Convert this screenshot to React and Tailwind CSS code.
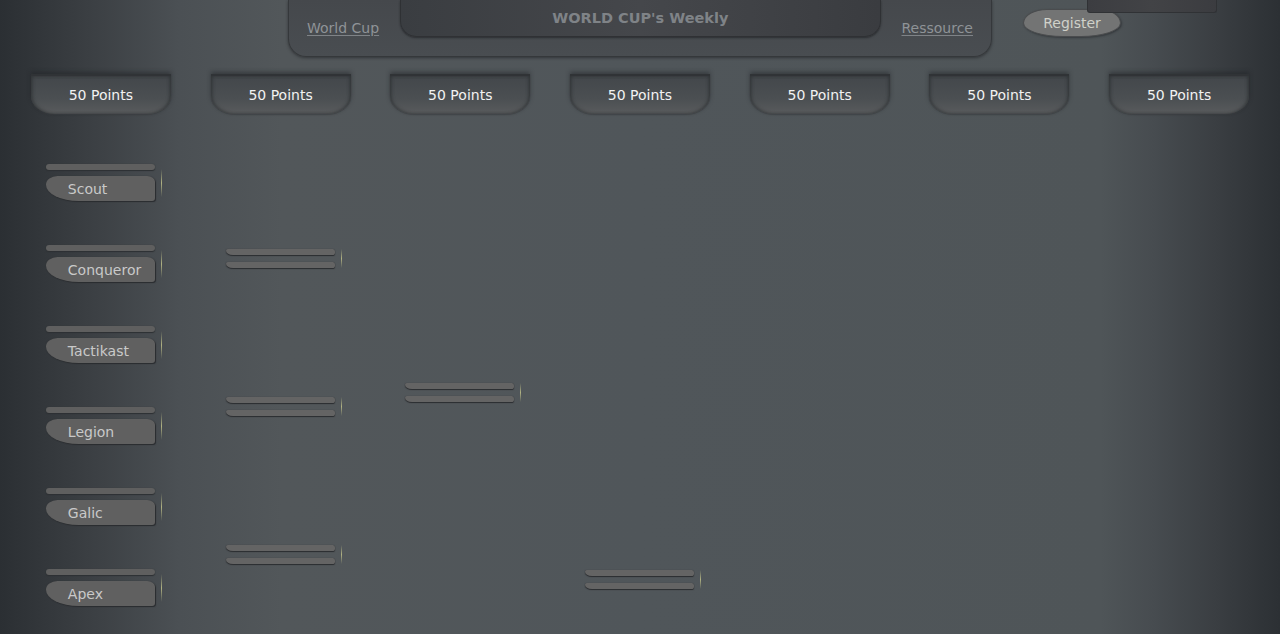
import React from "react";

const teams = ["Scout", "Conqueror", "Tactikast", "Legion", "Galic", "Apex"];

// rounds after the first one: padding from the tab row and gap between matches
const rounds = [
  { pad: "pt-[135px] gap-[129px]", count: 3 },
  { pad: "pt-[269px] gap-[129px]", count: 1 },
  { pad: "pt-[456px] gap-[129px]", count: 1 },
  { pad: "pt-[135px]", count: 0 },
  { pad: "pt-[135px]", count: 0 },
  { pad: "pt-[135px]", count: 0 },
];

const Accent = ({ tall }) => (
  <div
    className={`ml-[6px] w-px shrink-0 bg-[linear-gradient(to_bottom,rgba(170,172,120,0),#b0b283_50%,rgba(170,172,120,0))] ${
      tall ? "h-[28px]" : "h-[19px]"
    }`}
  />
);

const Bar = () => (
  <div className="h-[6px] w-[109px] bg-[#646464] rounded-[2px_3px_3px_8px/2px_3px_3px_5px] shadow-[0_1px_1px_#2b2d30,0_0_1px_#34373a]" />
);

const TeamSlot = ({ name }) => (
  <div className="flex items-center">
    <div className="flex flex-col gap-[6px] w-[109px]">
      <div className="h-[6px] w-[109px] bg-[#5f5f5f] rounded-[3px] shadow-[0_1px_1px_#2d3033,0_0_1px_#33363a]" />
      <div className="h-[25px] w-[109px] bg-[#606060] pl-[22px] pt-[1px] flex items-center text-[14px] text-[#c9c9c9] rounded-[12px_8px_3px_34px/9px_6px_3px_17px] shadow-[1px_1px_1px_#2a2c2f,0_0_1px_#303336]">
        {name}
      </div>
    </div>
    <Accent tall />
  </div>
);

const Match = () => (
  <div className="flex items-center">
    <div className="flex flex-col gap-[7px] w-[109px]">
      <Bar />
      <Bar />
    </div>
    <Accent />
  </div>
);

export default function App() {
  return (
    <div className="relative min-h-[634px] w-full overflow-hidden font-['DejaVu_Sans','Liberation_Sans',sans-serif] bg-[linear-gradient(to_right,#2b2f33_0%,#3b3f43_7%,#4b5054_14%,#52575a_22%,#50565a_50%,#4f5558_86%,#474c50_90%,#3a3e42_95%,#2c3034_100%)]">
      {/* top bar */}
      <div className="flex h-[57px]">
        <div className="w-[288px] shrink-0" />
        <header className="w-[704px] h-[57px] shrink-0 flex justify-between px-[18px] bg-[linear-gradient(to_bottom,#45484c,#494d51)] border-x border-b border-[#35383b] rounded-b-[18px] shadow-[0_1px_3px_rgba(30,32,35,0.6)]">
          <a href="#" className="mt-[18px] h-[20px] leading-[20px] text-[14px] text-[#8f9397] underline decoration-[#7f8387] underline-offset-2">
            World Cup
          </a>
          <div className="w-[481px] h-[37px] flex items-center justify-center pt-[2px] bg-[linear-gradient(to_right,#3a3d41,#45474b_50%,#3a3c40)] border-x border-b border-[#2f3134] rounded-b-[16px] shadow-[0_1px_2px_rgba(25,27,30,0.6)]">
            <span className="text-[14.5px] font-bold text-[#7f8387]">WORLD CUP's Weekly</span>
          </div>
          <a href="#" className="mt-[18px] h-[20px] leading-[20px] text-[14px] text-[#8f9397] underline decoration-[#7f8387] underline-offset-2">
            Ressource
          </a>
        </header>
        <div className="ml-[31px] mt-[9px]">
          <button className="w-[98px] h-[28px] flex items-center justify-center text-[14px] text-[#d0d1c9] bg-[#737474] border border-[#4a4c4e] rounded-[24px_22px_40px_40px/14px_14px_14px_14px] shadow-[1px_1px_2px_rgba(30,32,35,0.5)]">
            Register
          </button>
        </div>
      </div>

      {/* dropdown strip over the register button */}
      <div className="absolute left-[1087px] top-0 w-[130px] h-[13px] bg-[linear-gradient(to_right,#3c3d41,#424346_50%,#3b3c40)] border-x border-b border-[#303235] rounded-b-[3px]" />

      {/* round headers */}
      <div className="grid grid-cols-7 px-[11px] mt-[17px]">
        {Array.from({ length: 7 }).map((_, i) => (
          <div key={i} className="w-[140px] h-[40px] mx-auto flex items-center justify-center pt-[1px] text-[14px] text-[#f2f2f2] bg-[linear-gradient(to_bottom,#43474b,#4b4f52_60%,#595b5d)] border-t-2 border-[#303336] rounded-b-[24px_18px] shadow-[inset_2px_0_3px_rgba(40,43,46,0.5),inset_-2px_0_3px_rgba(40,43,46,0.5),0_-2px_4px_rgba(30,32,35,0.5),0_1px_1px_rgba(60,62,65,0.6)]">
            50 Points
          </div>
        ))}
      </div>

      {/* bracket */}
      <div className="grid grid-cols-7 px-[11px]">
        <div className="w-[140px] mx-auto pl-[15px] pt-[50px] flex flex-col gap-[44px]">
          {teams.map((t) => (
            <TeamSlot key={t} name={t} />
          ))}
        </div>
        {rounds.map((r, i) => (
          <div key={i} className={`w-[140px] mx-auto pl-[15px] flex flex-col ${r.pad}`}>
            {Array.from({ length: r.count }).map((_, j) => (
              <Match key={j} />
            ))}
          </div>
        ))}
      </div>
    </div>
  );
}
